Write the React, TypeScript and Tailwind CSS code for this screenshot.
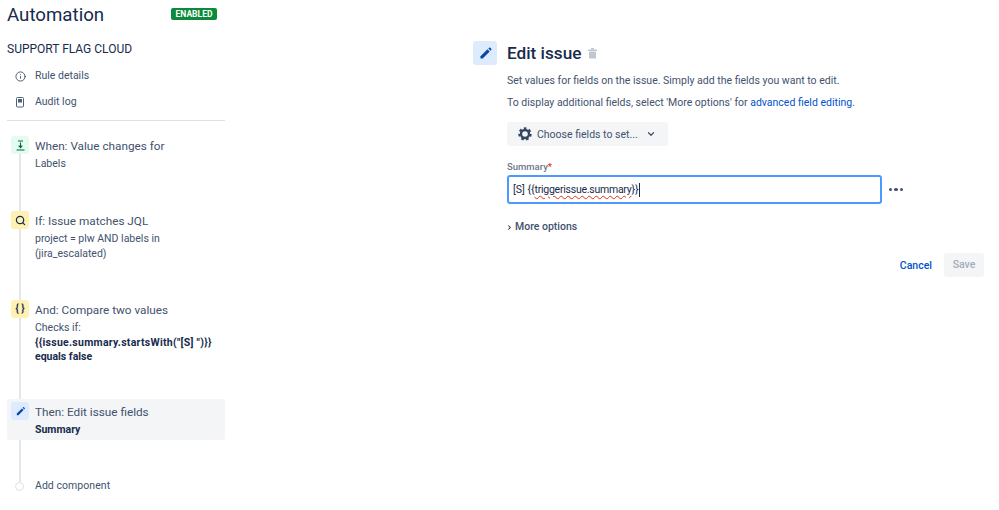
import { ChevronDown, ChevronRight, Info, Search } from "lucide-react";

const font = { fontFamily: 'Roboto, "Noto Sans", sans-serif' };

function Pencil({ size }: { size: number }) {
  return (
    <svg width={size} height={size} viewBox="0 0 24 24" fill="#0747a6">
      <path d="M4 16.5 15.2 5.3l3.5 3.5L7.5 20H4v-3.5Z" />
      <path d="m16.6 3.9 1-1a1.5 1.5 0 0 1 2.1 0l1.4 1.4a1.5 1.5 0 0 1 0 2.1l-1 1-3.5-3.5Z" />
    </svg>
  );
}

function Step({
  tile,
  icon,
  title,
  children,
  h,
  active,
}: {
  tile: string;
  icon: React.ReactNode;
  title: string;
  children: React.ReactNode;
  h: string;
  active?: boolean;
}) {
  return (
    <div className={`flex gap-[6px] pl-1 rounded-[3px] ${h} ${active ? "bg-[#f4f5f7] pt-[3px]" : ""}`}>
      <div className={`relative w-[18px] h-[18px] rounded-[3px] flex items-center justify-center shrink-0 ${tile}`}>
        {icon}
      </div>
      <div className="pt-[1px]">
        <div className="text-[11.75px] leading-[18px] text-[#42526e] whitespace-nowrap">{title}</div>
        <div className="mt-[2px] text-[10.5px] leading-[14.5px] text-[#42526e]">{children}</div>
      </div>
    </div>
  );
}

export default function App() {
  return (
    <div className="relative w-[999px] h-[510px] bg-white flex overflow-hidden" style={font}>
      {/* timeline rail */}
      <div className="absolute left-[19px] top-[150px] w-[1.5px] h-[332px] bg-[#e4e6ea]" />

      <aside className="relative w-[218px] ml-[7px] shrink-0">
        <div className="flex items-center justify-between h-[30px]">
          <h1 className="text-[18.7px] leading-[30px] text-[#172b4d]">Automation</h1>
          <span className="mb-[2px] h-[12px] w-[46px] mr-[8px] rounded-[2px] bg-[#0a8a3a] text-white text-[8.5px] font-bold leading-[12px] text-center">
            ENABLED
          </span>
        </div>
        <div className="mt-[10px] text-[12px] leading-[18px] text-[#172b4d]">SUPPORT FLAG CLOUD</div>

        <div className="mt-[9px] flex items-center gap-[9px] pl-[8px] h-[18px] text-[10.5px] text-[#42526e]">
          <Info size={11} strokeWidth={2} />
          <span>Rule details</span>
        </div>
        <div className="mt-[8px] flex items-center gap-[10px] pl-[9px] h-[18px] text-[10.5px] text-[#42526e]">
          <svg width="9" height="11" viewBox="0 0 9 11">
            <rect x="0.5" y="0.5" width="7" height="9.5" rx="1" fill="#fff" stroke="#505f79" />
            <rect x="2" y="2" width="4" height="3.5" fill="#505f79" />
          </svg>
          <span>Audit log</span>
        </div>
        <div className="mt-[9px] h-[1px] bg-[#dfe1e6]" />

        <div className="mt-[15px]">
          <Step
            h="h-[75px]"
            tile="bg-[#e3fcef]"
            title="When: Value changes for"
            icon={
              <svg width="11" height="11" viewBox="0 0 11 11" fill="none" stroke="#006644" strokeWidth="1.1">
                <path d="M3 1h5M5.5 2.5v5M3.7 5.7l1.8 2 1.8-2M1.5 10h8" />
              </svg>
            }
          >
            Labels
          </Step>
          <Step
            h="h-[89px]"
            tile="bg-[#fff0b3]"
            title="If: Issue matches JQL"
            icon={<Search size={11} strokeWidth={2.6} color="#172b4d" />}
          >
            project = plw AND labels in
            <br />
            (jira_escalated)
          </Step>
          <Step
            h="h-[99px]"
            tile="bg-[#fff0b3]"
            title="And: Compare two values"
            icon={<span className="text-[10px] leading-[18px] font-bold text-[#172b4d]">{"{ }"}</span>}
          >
            Checks if:
            <br />
            <b className="text-[#172b4d] tracking-[0.28px]">{'{{issue.summary.startsWith("[S] ")}}'}</b>
            <br />
            <b className="text-[#172b4d]">equals false</b>
          </Step>
          <Step
            active
            h="h-[41px]"
            tile="bg-[#deebff]"
            title="Then: Edit issue fields"
            icon={<Pencil size={11} />}
          >
            <b className="text-[#172b4d]">Summary</b>
          </Step>
        </div>

        <div className="mt-[37px] flex items-center gap-[11px] pl-[8px] h-[18px]">
          <div className="relative w-[9px] h-[9px] rounded-full border border-[#dfe1e6] bg-white" />
          <span className="text-[10.5px] text-[#42526e] tracking-[0.05px]">Add component</span>
        </div>
      </aside>

      <main className="ml-[248px] mt-[41px] w-[511px] shrink-0 flex gap-[10px]">
        <div className="w-[24px] h-[24px] rounded-[3px] bg-[#deebff] flex items-center justify-center shrink-0">
          <Pencil size={15} />
        </div>
        <div className="flex-1">
          <div className="flex items-center h-[24px] gap-[7px]">
            <h2 className="text-[17.2px] leading-[24px] font-medium text-[#172b4d]">Edit issue</h2>
            <svg width="9" height="11" viewBox="0 0 9 11" fill="#c1c7d0">
              <rect x="3" y="0" width="3" height="1.5" />
              <rect x="0" y="1.5" width="9" height="1.5" />
              <rect x="1" y="3.5" width="7" height="7" rx="0.8" />
            </svg>
          </div>
          <p className="mt-[8px] text-[10.5px] leading-[16px] text-[#42526e]">
            Set values for fields on the issue. Simply add the fields you want to edit.
          </p>
          <p className="mt-[6px] text-[10.5px] leading-[16px] text-[#42526e]">
            To display additional fields, select 'More options' for{" "}
            <span className="text-[#0052cc]">advanced field editing</span>.
          </p>
          <button className="mt-[11px] w-[161px] h-[24px] rounded-[3px] bg-[#f4f5f7] flex items-center pl-[11px] text-[10.5px] text-[#42526e]">
            <svg width="14" height="14" viewBox="0 0 14 14" fill="none" stroke="#344563">
              <circle cx="7" cy="7" r="4" strokeWidth="2.4" />
              <circle cx="7" cy="7" r="5.7" strokeWidth="2" strokeDasharray="2.6 2.4" />
            </svg>
            <span className="ml-[5px] pt-[1px]">Choose fields to set...</span>
            <ChevronDown size={10} strokeWidth={3} className="ml-[8px]" />
          </button>

          <div className="mt-[14px] h-[14px] text-[9.5px] leading-[14px] font-medium text-[#6b778c]">
            Summary<span className="text-[#de350b]">*</span>
          </div>
          <div className="flex items-center mt-[1px] gap-[7px] w-[396px]">
            <div className="w-[375px] h-[29px] rounded-[3px] border-2 border-[#4c9aff] bg-white flex items-center pl-[4px] text-[10.5px] text-[#172b4d]">
              <span>[S] {"{{"}</span>
              <span className="underline decoration-wavy decoration-[#de350b] decoration-1 underline-offset-2 tracking-[-0.25px]">
                triggerissue.summary
              </span>
              <span>{"}}"}</span>
              <span className="w-[1px] h-[14px] bg-[#172b4d]" />
            </div>
            <div className="flex gap-[2px]">
              <span className="w-[3.5px] h-[3.5px] rounded-full bg-[#42526e]" />
              <span className="w-[3.5px] h-[3.5px] rounded-full bg-[#42526e]" />
              <span className="w-[3.5px] h-[3.5px] rounded-full bg-[#42526e]" />
            </div>
          </div>
          <div className="mt-[14px] flex items-center h-[18px] gap-[2px] text-[10.5px] font-medium text-[#42526e]">
            <ChevronRight size={7} strokeWidth={3.5} color="#172b4d" className="-ml-[1px]" />
            <span>More options</span>
          </div>
          <div className="mt-[17px] flex justify-end items-center gap-[12px]">
            <span className="pt-[1px] text-[10.5px] font-medium text-[#0052cc]">Cancel</span>
            <button className="w-[40px] h-[24px] rounded-[3px] bg-[#f4f5f7] text-[10.5px] font-medium text-[#a5adba]">
              Save
            </button>
          </div>
        </div>
      </main>
    </div>
  );
}
